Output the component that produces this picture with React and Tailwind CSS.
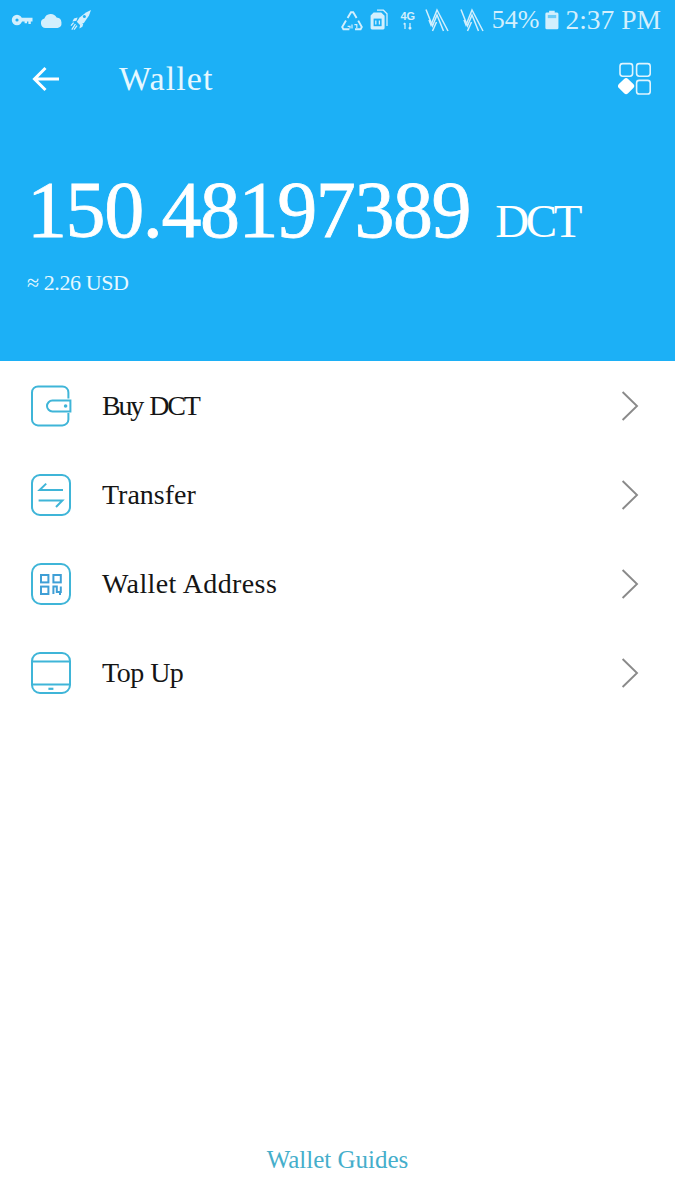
const serif = "font-['Liberation_Serif',serif]";

// Status-bar glyphs, left group
function KeyIcon() {
  return (
    <svg width="22" height="12" viewBox="0 0 22 12" fill="none" className="text-[#d3effd]">
      <circle cx="6" cy="6" r="3.4" stroke="currentColor" strokeWidth="3.6" />
      <path d="M10 3.8h11.5v3.6H19.8v2.6h-2.4V7.4h-1.4v1.8h-2.4V7.4H10z" fill="currentColor" />
    </svg>
  );
}

function CloudIcon() {
  return (
    <svg width="23" height="15" viewBox="0 0 23 15" className="text-[#d3effd]">
      <path
        d="M5.5 15A4.8 4.8 0 0 1 4.4 5.6 6.6 6.6 0 0 1 16.6 4.6 5.3 5.3 0 0 1 17.6 15z"
        fill="currentColor"
      />
    </svg>
  );
}

function RocketIcon() {
  return (
    <svg width="22" height="22" viewBox="0 0 22 22" fill="none" className="text-[#d3effd]">
      <path d="M21 1l-5 2.6-6.4 5-2.8 4.2 3.4 3.4 4.2-3 4.6-6.6z" fill="currentColor" />
      <circle cx="14.4" cy="7.6" r="1.5" fill="#1cb0f6" />
      <path d="M7.6 8.6 4 9.6l-1.6 3 4-.8zM13.4 14.4l-1 3.4-3 1.8.8-4z" fill="currentColor" />
      <path d="M5.4 15l-3.6 5.6M7 16.6l-3 4M3.6 13.6 1 16.6" stroke="currentColor" strokeWidth="1.3" />
    </svg>
  );
}

// Status-bar glyphs, right group
function RecycleIcon() {
  return (
    <svg width="22" height="22" viewBox="0 0 22 22" fill="none" stroke="#d3effd" strokeWidth="1.9">
      <path d="M6.6 9 10 3.2h2.2L15.6 9" />
      <path d="M17.2 11.6l3.6 6.4-1.2 2.2H14" />
      <path d="M8.4 20.2H2.4L1.2 18l3.8-6.4" />
      <path d="M6.6 17.4h2.4v2M11 15.4v4M13.4 15.6h2.4v3.4" strokeWidth="1.2" />
    </svg>
  );
}

function SimIcon() {
  return (
    <svg width="20" height="22" viewBox="0 0 20 22" fill="none">
      <path d="M8 1.2h6.4l3.6 3.6V17" stroke="#d3effd" strokeWidth="1.3" />
      <path d="M4.6 3.4h7.6l3.4 3.4V19a1.4 1.4 0 0 1-1.4 1.4H3A1.4 1.4 0 0 1 1.6 19V6.4z" fill="#d3effd" />
      <rect x="4.6" y="9.6" width="8" height="7.6" fill="#1cb0f6" />
      <path d="M6.8 11.4v4M10.4 11.4v4" stroke="#d3effd" strokeWidth="1.3" />
    </svg>
  );
}

function NetworkIcon() {
  return (
    <div className="flex w-[18px] flex-col items-center">
      <span className="font-['Liberation_Sans',sans-serif] text-[11px] leading-[12px] font-bold text-[#d3effd]">4G</span>
      <svg width="12" height="8" viewBox="0 0 12 8" fill="none" stroke="#d3effd" strokeWidth="1.3">
        <path d="M3 7V1M1.6 2.4 3 1M8 1v6M6.6 5.6 8 7l1.4-1.4" />
      </svg>
    </div>
  );
}

function SignalIcon() {
  return (
    <svg width="24" height="24" viewBox="0 0 24 24" fill="none" stroke="#d3effd" strokeWidth="1.5">
      <path d="M1 1.5 7.5 18 12 7l6.5 16" />
      <path d="M4 12 6 17 12 2 23 23" />
      <path d="M11.5 14 7.5 23" />
    </svg>
  );
}

function BatteryIcon() {
  return (
    <svg width="14" height="22" viewBox="0 0 15 22">
      <path d="M4.4 1h6v2H13a1.6 1.6 0 0 1 1.4 1.6V19.6A1.6 1.6 0 0 1 13 21H2a1.6 1.6 0 0 1-1.6-1.4V4.6A1.6 1.6 0 0 1 2 3h2.4z" fill="#d3effd" />
      <rect x="3" y="5.6" width="9" height="3.4" fill="#1cb0f6" opacity="0.55" />
    </svg>
  );
}

function BackArrow() {
  return (
    <svg width="28" height="26" viewBox="0 0 28 26" fill="none" stroke="#ffffff" strokeWidth="3">
      <path d="M27 13H3M13.5 2 2.5 13l11 11" />
    </svg>
  );
}

function GridIcon() {
  return (
    <svg width="34" height="34" viewBox="0 0 34 34" fill="none" stroke="#dff4fe" strokeWidth="1.6">
      <rect x="2" y="1.6" width="12.6" height="12.6" rx="2.6" />
      <rect x="18.6" y="1.6" width="13.6" height="12.6" rx="2.6" />
      <rect x="18.6" y="18.4" width="13.6" height="13.6" rx="2.6" />
      <rect x="2.4" y="18.4" width="11.4" height="11.4" rx="2" transform="rotate(45 8.1 24.1)" fill="#ffffff" stroke="#ffffff" />
    </svg>
  );
}

// Row icons share one outlined rounded square
function RowIcon({ children }) {
  return (
    <svg width="42" height="42" viewBox="0 0 42 42" fill="none" stroke="#3fb5d8" strokeWidth="2" className="shrink-0">
      {children}
    </svg>
  );
}

function WalletGlyph() {
  return (
    <RowIcon>
      <path d="M38.4 13.6V7.4a6 6 0 0 0-6-6H8a6 6 0 0 0-6 6v27a6 6 0 0 0 6 6h24.4a6 6 0 0 0 6-6V28" />
      <path d="M40.4 15.6H22.4a5.4 5.4 0 0 0 0 10.8h18z" fill="#ffffff" />
      <circle cx="35.6" cy="21" r="1.8" fill="#3fb5d8" stroke="none" />
    </RowIcon>
  );
}

function TransferGlyph() {
  return (
    <RowIcon>
      <rect x="2" y="1" width="38" height="40" rx="8" />
      <path d="M33 16H9.6l6.6-6.4" />
      <path d="M8.6 26.4H32.4L26 33" />
    </RowIcon>
  );
}

function QrGlyph() {
  return (
    <RowIcon>
      <rect x="2" y="1" width="38" height="40" rx="9" />
      <g stroke="#3f9fd6" strokeWidth="2">
        <rect x="11" y="12" width="7.4" height="7.4" />
        <rect x="23.4" y="12" width="7.4" height="7.4" />
        <rect x="11" y="23.6" width="7.4" height="7.4" />
        <path d="M23.4 31v-7.4h3.4v5.4h4v-5.4M29 31h2" />
      </g>
    </RowIcon>
  );
}

function TabletGlyph() {
  return (
    <RowIcon>
      <rect x="2" y="1" width="38" height="40" rx="8" />
      <path d="M2 9.6h38M2 32.4h38" />
      <path d="M18.4 36.8h5" strokeWidth="2.2" />
    </RowIcon>
  );
}

function Chevron() {
  return (
    <svg width="18" height="30" viewBox="0 0 18 30" fill="none" stroke="#8a8a8a" strokeWidth="1.9">
      <path d="M1.6 1 16 15 1.6 29" />
    </svg>
  );
}

const rows = [
  { label: "Buy DCT", icon: <WalletGlyph />, spacing: "tracking-[-2.2px] [word-spacing:2.4px]" },
  { label: "Transfer", icon: <TransferGlyph />, spacing: "tracking-[0px]" },
  { label: "Wallet Address", icon: <QrGlyph />, spacing: "tracking-[0.4px]" },
  { label: "Top Up", icon: <TabletGlyph />, spacing: "tracking-[-0.5px]" },
];

export default function App() {
  return (
    <div className={`flex h-[1200px] w-[675px] flex-col bg-white ${serif}`}>
      <header className="flex h-[361px] flex-col bg-[#1cb0f6] text-white">
        <div className="flex h-[40px] items-center justify-between pr-[14px] pl-[11px]">
          <div className="flex items-center gap-[7px]">
            <KeyIcon />
            <CloudIcon />
            <RocketIcon />
          </div>
          <div className="flex items-center text-[#d3effd]">
            <RecycleIcon />
            <span className="ml-[6px]"><SimIcon /></span>
            <span className="ml-[10px]"><NetworkIcon /></span>
            <span className="ml-[8px]"><SignalIcon /></span>
            <span className="ml-[11px]"><SignalIcon /></span>
            <span className="ml-[8px] text-[26px] leading-none">54%</span>
            <span className="ml-[6px]"><BatteryIcon /></span>
            <span className="ml-[6px] text-[27.5px] leading-none">2:37 PM</span>
          </div>
        </div>
        <nav className="flex h-[78px] items-center justify-between pr-[23px] pl-[32px]">
          <div className="flex items-center gap-[59px]">
            <BackArrow />
            <span className="text-[34px] leading-none tracking-[1.1px] text-[#e6f8ff]">Wallet</span>
          </div>
          <GridIcon />
        </nav>
        <div className="mt-[37px] flex items-baseline gap-[25px] pl-[27px]">
          <span className="text-[80px] leading-[110px] tracking-[-1.4px] [-webkit-text-stroke:0.8px_white]">150.48197389</span>
          <span className="text-[47px] leading-none tracking-[-3.4px]">DCT</span>
        </div>
        <div className="mt-[3px] pl-[27px] text-[22px] leading-[30px] tracking-[-0.4px] text-[#e6f8ff]">≈ 2.26 USD</div>
      </header>

      <ul className="flex flex-col">
        {rows.map((row) => (
          <li key={row.label} className="flex h-[89px] items-center pr-[36px] pl-[30px]">
            {row.icon}
            <span className={`ml-[30px] flex-1 text-[28px] leading-none text-[#151515] ${row.spacing}`}>{row.label}</span>
            <Chevron />
          </li>
        ))}
      </ul>

      <footer className="mt-auto flex h-[80px] items-start justify-center pt-[21px]">
        <span className="text-[25px] leading-[38px] text-[#45aecb]">Wallet Guides</span>
      </footer>
    </div>
  );
}
